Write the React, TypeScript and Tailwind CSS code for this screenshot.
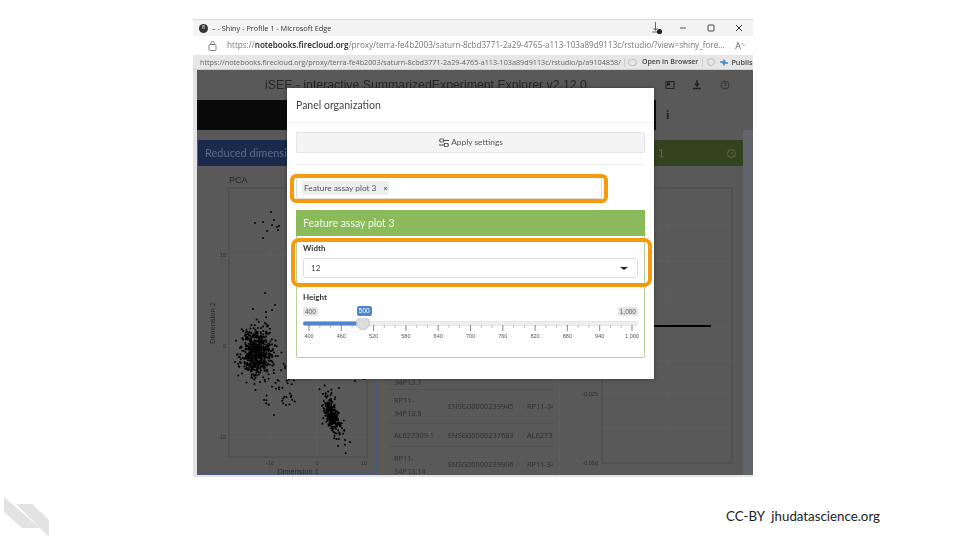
import React from "react";

function rng(seed: number) {
  let s = seed;
  return () => {
    s = (s * 1664525 + 1013904223) % 4294967296;
    return s / 4294967296;
  };
}
function gauss(r: () => number) {
  return Math.sqrt(-2 * Math.log(r() + 1e-6)) * Math.cos(2 * Math.PI * r());
}
const r = rng(42);
const pts: [number, number][] = [];
for (let i = 0; i < 620; i++) pts.push([257 - 193 + gauss(r) * 8, 352 - 166 + gauss(r) * 13]);
for (let i = 0; i < 250; i++) {
  const t = gauss(r);
  pts.push([332 - 193 + t * 2.5 + gauss(r) * 3.6, 414 - 166 + t * 10.5]);
}
for (let i = 0; i < 40; i++) pts.push([263 + r() * 32 - 193, 360 + r() * 45 - 166]);
const extra: [number, number][] = [
  [271, 212], [255, 223], [263, 222], [274, 220], [272, 225], [267, 231], [277, 227], [279, 226], [278, 230],
  [263, 238], [265, 293], [253, 309], [266, 312], [275, 305], [272, 310], [296, 353], [285, 368],
  [316, 377], [355, 381], [339, 388], [356, 374], [364, 379], [274, 415], [286, 405], [291, 397], [338, 446], [345, 440], [350, 442], [235, 362], [240, 362],
];
extra.forEach(([x, y]) => pts.push([x - 193, y - 166]));

const ticksMajor = Array.from({ length: 11 }, (_, i) => 6 + i * 32.3);
const labels = ["400", "460", "520", "580", "640", "700", "760", "820", "880", "940", "1,000"];

function TopTitle() {
  return (
    <div className="h-[17px] bg-[#f3f3f3] flex items-center pl-[6px] pr-[9px] text-[#333] font-['Open_Sans',sans-serif] text-[7.3px] border-t border-[#ddd]">
      <span className="w-[9px] h-[9px] rounded-full bg-[#333] mr-[4px] flex items-center justify-center text-white text-[5px]">8</span>
      <span>– - Shiny - Profile 1 - Microsoft Edge</span>
      <span className="ml-auto flex items-center text-[#444]">
        <svg width="12" height="14" viewBox="0 0 12 14" className="mr-[16px]">
          <path d="M4.5 1v8M2.5 7l2 2.5L6.5 7M1 11h7" stroke="#666" strokeWidth="1" fill="none" />
          <circle cx="8.5" cy="10.5" r="2.6" fill="#222" />
        </svg>
        <svg width="8" height="8" viewBox="0 0 8 8" className="mr-[20px]"><path d="M1 4h6" stroke="#555" /></svg>
        <svg width="8" height="8" viewBox="0 0 8 8" className="mr-[20px]"><rect x="1" y="1" width="6" height="6" rx="1" stroke="#444" fill="none" /></svg>
        <svg width="8" height="8" viewBox="0 0 8 8" className="mr-[1px]"><path d="M1 1l6 6M7 1L1 7" stroke="#333" /></svg>
      </span>
    </div>
  );
}

function UrlBar() {
  return (
    <div className="h-[19px] bg-white flex items-center pl-[15px] pr-[8px] font-['Open_Sans',sans-serif] text-[8.15px] text-[#777] whitespace-nowrap">
      <svg width="9" height="10" viewBox="0 0 9 10" className="mr-[10px] shrink-0">
        <rect x="1" y="3.5" width="7" height="6" rx="1" fill="none" stroke="#666" strokeWidth="0.8" />
        <path d="M2.8 3.5V2a1.7 1.7 0 0 1 3.4 0v1.5" fill="none" stroke="#666" strokeWidth="0.8" />
      </svg>
      <span>https://<b className="text-[#222] font-semibold">notebooks.firecloud.org</b>/proxy/terra-fe4b2003/saturn-8cbd3771-2a29-4765-a113-103a89d9113c/rstudio/?view=shiny_fore...</span>
      <span className="ml-auto text-[9px] text-[#666]">A<sup className="text-[5px]">∿</sup></span>
    </div>
  );
}

function Bookmarks() {
  return (
    <div className="h-[15px] bg-[#e6e6e6] border-b border-[#cfcfcf] flex items-center pl-[7px] font-['Open_Sans',sans-serif] text-[7.25px] text-[#666] whitespace-nowrap overflow-hidden">
      <span>https://notebooks.firecloud.org/proxy/terra-fe4b2003/saturn-8cbd3771-2a29-4765-a113-103a89d9113c/rstudio/p/a9104858/</span>
      <span className="w-px h-[9px] bg-[#ccc] mx-[3px] shrink-0" />
      <span className="w-[9px] h-[7px] border border-[#bbb] rounded-sm mr-[5px] shrink-0" />
      <b className="text-[#444] font-semibold text-[7px]">Open in Browser</b>
      <span className="w-px h-[9px] bg-[#ccc] mx-[4px] shrink-0" />
      <span className="w-[8px] h-[8px] rounded-full border border-[#bbb] mr-[4px] shrink-0" />
      <svg width="10" height="9" viewBox="0 0 10 9" className="mr-[2px] shrink-0"><path d="M1 4h5l-1.5-2.5M9 5H4l1.5 2.5" stroke="#3f88c5" strokeWidth="1.4" fill="none" /></svg>
      <b className="text-[#444] font-semibold">Publish</b>
    </div>
  );
}

function ReducedPanel() {
  return (
    <div className="w-[180px] h-full shrink-0 flex flex-col border-x border-b border-[#4a5a80] overflow-hidden">
      <div className="h-[26px] bg-[#1b2a4c] pl-[7px] flex items-center text-[11px] text-[#5b6a8a] font-['Lato',sans-serif] whitespace-nowrap shrink-0">Reduced dimension plot 1</div>
      <svg width="178" height="310" viewBox="5 0 178 310" className="shrink-0">
        <text x="36" y="17" fontSize="9" fill="#262626" fontFamily="Liberation Sans">PCA</text>
        <rect x="36" y="22" width="138" height="269" fill="none" stroke="#444" strokeWidth="0.7" />
        {[77, 124, 171].map((x) => <line key={x} x1={x} x2={x} y1="22" y2="291" stroke="#616161" strokeWidth="0.5" />)}
        {[89, 180, 271].map((y) => <line key={y} x1="36" x2="174" y1={y} y2={y} stroke="#616161" strokeWidth="0.5" />)}
        {pts.map(([x, y], i) => <circle key={i} cx={x} cy={y} r="1" fill="#000" />)}
        <text x="33" y="91" fontSize="5.5" textAnchor="end" fill="#2c2c2c" fontFamily="Liberation Sans">10</text>
        <text x="33" y="182" fontSize="5.5" textAnchor="end" fill="#2c2c2c" fontFamily="Liberation Sans">0</text>
        <text x="33" y="273" fontSize="5.5" textAnchor="end" fill="#2c2c2c" fontFamily="Liberation Sans">-10</text>
        <text x="77" y="299" fontSize="5.5" textAnchor="middle" fill="#2c2c2c" fontFamily="Liberation Sans">-10</text>
        <text x="124" y="299" fontSize="5.5" textAnchor="middle" fill="#2c2c2c" fontFamily="Liberation Sans">0</text>
        <text x="171" y="299" fontSize="5.5" textAnchor="middle" fill="#2c2c2c" fontFamily="Liberation Sans">10</text>
        <text x="105" y="307.5" fontSize="7.5" textAnchor="middle" fill="#262626" fontFamily="Liberation Sans">Dimension 1</text>
        <text transform="translate(22 157) rotate(-90)" x="0" y="0" fontSize="7.5" textAnchor="middle" fill="#262626" fontFamily="Liberation Sans">Dimension 2</text>
      </svg>
    </div>
  );
}

function TablePanel() {
  const rows = [
    ["RP11-\n34P13.8", "ENSG00000239945", "RP11-34P13.8", "h-[34px]"],
    ["AL627309.1", "ENSG00000237683", "AL627309.1", "h-[23px]"],
    ["RP11-\n34P13.14", "ENSG00000239906", "RP11-34P13.14", "h-[36px]"],
  ];
  return (
    <div className="w-[178px] h-full shrink-0 ml-[1px] border-x border-[#6a5c48] pl-[6px] pr-[5px] overflow-hidden font-['Open_Sans',sans-serif] text-[7.4px] text-[#2e2e2e] leading-[12.5px]">
      <div className="pt-[236px] pl-[5px] h-[250px] border-b border-[#525252] overflow-hidden">34P13.7</div>
      {rows.map((row) => (
        <div key={row[0]} className={`${row[3]} flex items-center border-b border-[#525252] pl-[5px] whitespace-nowrap overflow-hidden`}>
          <span className="w-[54px] whitespace-pre-line shrink-0">{row[0]}</span>
          <span className="w-[79px] shrink-0">{row[1]}</span>
          <span className="w-[26px] overflow-hidden shrink-0">{row[2]}</span>
        </div>
      ))}
    </div>
  );
}

function RightPanel() {
  return (
    <div className="w-[180px] h-full shrink-0 -ml-[1px] flex flex-col overflow-hidden">
      <div className="h-[26px] bg-[#33431f] flex items-center justify-between pl-[95px] pr-[7px] text-[11px] text-[#5d6b48] font-['Lato',sans-serif] shrink-0">
        <span>1</span>
        <span className="w-[9px] h-[9px] rounded-full border border-[#5d6b48] text-[6px] flex items-center justify-center">?</span>
      </div>
      <svg width="180" height="310" viewBox="0 0 180 310" className="shrink-0">
        <rect x="39" y="22" width="130" height="275" fill="none" stroke="#474747" strokeWidth="0.8" />
        {[60, 95, 130, 160, 195, 228, 262].map((y) => <line key={y} x1="39" x2="169" y1={y} y2={y} stroke="#606060" strokeWidth="0.5" />)}
        <line x1="105" x2="105" y1="22" y2="297" stroke="#606060" strokeWidth="0.5" />
        <line x1="39" x2="148" y1="160" y2="160" stroke="#000" strokeWidth="2" />
        <text x="35" y="230" fontSize="5.5" textAnchor="end" fill="#2c2c2c" fontFamily="Liberation Sans">-0.025</text>
        <text x="35" y="299" fontSize="5.5" textAnchor="end" fill="#2c2c2c" fontFamily="Liberation Sans">-0.050</text>
      </svg>
    </div>
  );
}

function Slider() {
  return (
    <div className="font-['Liberation_Sans',sans-serif]">
      <div className="flex items-center text-[6.5px] text-[#555] h-[10px] mt-[4px]">
        <span className="bg-[#e6e6e6] rounded-[2px] px-[2px] h-[9px] leading-[9px]">400</span>
        <span className="bg-[#4f86cc] text-white rounded-[2px] px-[2px] h-[10px] leading-[10px] ml-[39px]">500</span>
        <span className="bg-[#e6e6e6] rounded-[2px] px-[2px] h-[9px] leading-[9px] ml-auto">1,000</span>
      </div>
      <svg width="335" height="16" viewBox="0 0 335 16" className="block mt-[2px]">
        <rect x="0" y="3.5" width="335" height="4" rx="2" fill="#eee" stroke="#ddd" strokeWidth="0.6" />
        <rect x="0" y="3.5" width="60" height="4" rx="2" fill="#4f86cc" />
        {ticksMajor.map((x, i) => (
          <g key={x}>
            <line x1={x} x2={x} y1="7" y2="13" stroke="#555" strokeWidth="0.7" />
            {i < 10 && <line x1={x + 10.8} x2={x + 10.8} y1="7" y2="10" stroke="#999" strokeWidth="0.6" />}
            {i < 10 && <line x1={x + 21.5} x2={x + 21.5} y1="7" y2="10" stroke="#999" strokeWidth="0.6" />}
          </g>
        ))}
        <circle cx="60" cy="5" r="6.5" fill="#dcdcdc" stroke="#c4c4c4" />
      </svg>
      <div className="flex text-[5.5px] leading-[5px] text-[#555] pl-[6px] h-[8px]">
        {labels.map((l, i) => (
          <span key={l} className={`${i < 10 ? "w-[32.3px]" : "w-0"} relative`}>
            <span className="absolute left-0 -translate-x-1/2 whitespace-nowrap">{l}</span>
          </span>
        ))}
      </div>
    </div>
  );
}

function Modal() {
  return (
    <div className="absolute left-[94px] top-[69px] w-[367px] h-[291px] bg-white font-['Lato',sans-serif] text-[#333] shadow-[0_0_4px_rgba(0,0,0,0.4)]">
      <div className="h-[35px] border-b border-[#f0f0f0] flex items-center pl-[9px] pt-[1px] text-[10.5px] text-[#444]">Panel organization</div>
      <div className="px-[9px] pt-[9px]">
        <div className="h-[21px] bg-[#f4f4f4] border border-[#e5e5e5] rounded-[2px] flex items-center justify-center text-[8.4px] text-[#555]">
          <svg width="12" height="10" viewBox="0 0 12 10" className="mr-[1px]">
            <path d="M1 2.5h10M1 7h10" stroke="#444" strokeWidth="1" fill="none" />
            <rect x="2" y="1" width="3.5" height="3" fill="#fff" stroke="#444" strokeWidth="0.8" />
            <rect x="6.5" y="5.5" width="3.5" height="3" fill="#fff" stroke="#444" strokeWidth="0.8" />
          </svg>
          Apply settings
        </div>
        <div className="h-px bg-[#f0f0f0] mt-[11px]" />
        <div className="relative mt-[12px] w-[306px] h-[22px] border border-[#dcdcdc] rounded-[2px] flex items-center pl-[5px]">
          <span className="bg-[#eee] rounded-[2px] h-[14px] px-[2px] flex items-center text-[8.3px] text-[#555]">
            Feature assay plot 3<span className="ml-[7px] text-[7px] font-bold">×</span>
          </span>
          <span className="absolute -left-[7px] -top-[4px] w-[318px] h-[29px] border-[4px] border-[#f59a0e] rounded-[6px]" />
        </div>
        <div className="mt-[11px] h-[148px] border border-[#b5d19a] rounded-[2px] flex flex-col">
          <div className="h-[26px] bg-[#8bba5b] -mx-px -mt-px flex items-center pl-[7px] pt-[1px] text-[10.5px] text-[#f2f7ea]">Feature assay plot 3</div>
          <div className="relative px-[6px] pt-[7px]">
            <div className="text-[8px] font-bold leading-[10px] text-[#333]">Width</div>
            <div className="mt-[5px] h-[20px] border border-[#ddd] rounded-[3px] flex items-center justify-between pl-[7px] pr-[9px] text-[8px] text-[#444]">
              12
              <span className="w-0 h-0 border-x-[4px] border-x-transparent border-t-[3px] border-t-[#222]" />
            </div>
            <span className="absolute -left-[6px] top-[2px] w-[361px] h-[49px] border-[4px] border-[#f59a0e] rounded-[8px]" />
            <div className="text-[8px] font-bold leading-[10px] text-[#333] mt-[14px]">Height</div>
            <Slider />
          </div>
        </div>
      </div>
    </div>
  );
}

function AppArea() {
  return (
    <div className="relative h-[405px] ml-[4px] bg-[#595959] flex flex-col overflow-hidden">
      <div className="h-[30px] shrink-0 flex items-center">
        <span className="w-[458px] text-center text-[12.3px] text-[#262626] font-['Liberation_Sans',sans-serif] whitespace-nowrap">iSEE - interactive SummarizedExperiment Explorer v2.12.0</span>
        <svg width="10" height="10" viewBox="0 0 10 10" className="ml-[10px]"><rect x="1" y="1.5" width="8" height="7" fill="none" stroke="#222" /><rect x="2" y="2.5" width="3" height="3" fill="#222" /></svg>
        <svg width="10" height="10" viewBox="0 0 10 10" className="ml-[17px]"><path d="M5 0v5M3 3.5L5 6l2-2.5M1 8.5h8" stroke="#222" strokeWidth="1.5" fill="none" /></svg>
        <svg width="10" height="10" viewBox="0 0 10 10" className="ml-[18px]"><circle cx="5" cy="5" r="4" fill="none" stroke="#2a2a2a" strokeWidth="0.8" /><path d="M3.8 4a1.2 1.2 0 1 1 1.2 1.3V6M5 7v.8" fill="none" stroke="#2a2a2a" strokeWidth="0.8" /></svg>
      </div>
      <div className="h-[30px] shrink-0 flex items-center">
        <div className="w-[459px] h-full bg-[#0a0a0a]" />
        <span className="ml-[10px] text-[12px] font-bold text-[#262626] font-['Liberation_Serif',serif]">i</span>
      </div>
      <div className="h-[10px] shrink-0" />
      <div className="flex-1 flex gap-[4px] min-h-0">
        <ReducedPanel />
        <TablePanel />
        <RightPanel />
      </div>
      <div className="absolute right-0 top-[60px] bottom-0 w-[10px] bg-[#62656c]" />
    </div>
  );
}

export default function App() {
  return (
    <div className="w-[960px] h-[540px] bg-white overflow-hidden flex flex-col">
      <div className="pl-[193px] pt-[19px]">
        <div className="relative w-[560px] h-[458px] bg-[#e4e4e4] blur-[0.35px]">
          <TopTitle />
          <UrlBar />
          <Bookmarks />
          <AppArea />
          <Modal />
        </div>
      </div>
      <div className="flex justify-between pl-[4px] pr-[80px] pt-[19px]">
        <svg width="46" height="42" viewBox="0 0 46 42">
          <polygon points="0,1 36,32 18,32 0,16" fill="#e3e3e3" />
          <polygon points="12,8 28,8 45,24 45,41" fill="#e3e3e3" />
        </svg>
        <div className="text-[13.3px] text-[#222] font-['Lato',sans-serif] mt-[11px] whitespace-nowrap">CC-BY&nbsp; jhudatascience.org</div>
      </div>
    </div>
  );
}
